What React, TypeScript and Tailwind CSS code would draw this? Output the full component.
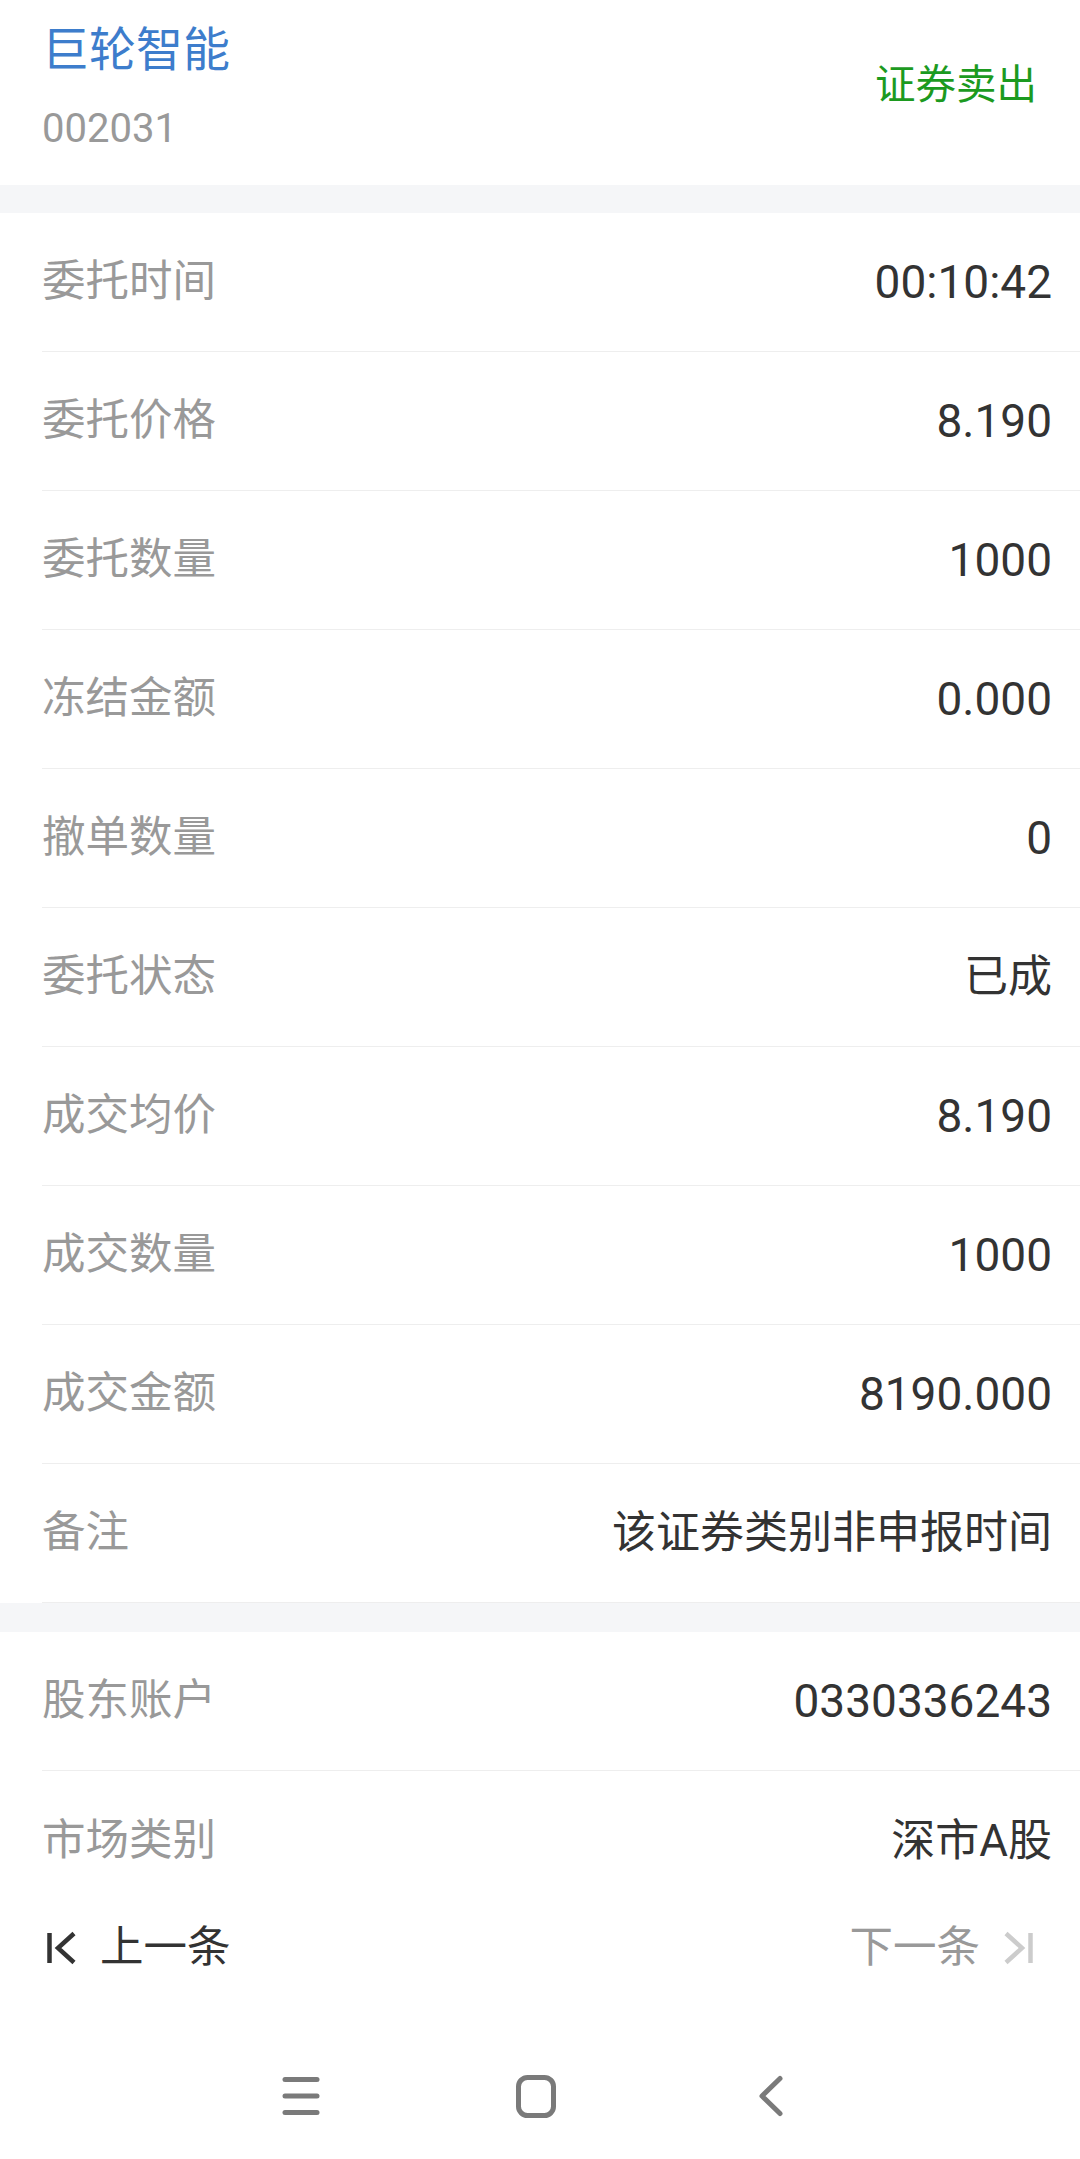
import React from "react";

const rows1: [string, string][] = [
  ["委托时间", "00:10:42"],
  ["委托价格", "8.190"],
  ["委托数量", "1000"],
  ["冻结金额", "0.000"],
  ["撤单数量", "0"],
  ["委托状态", "已成"],
  ["成交均价", "8.190"],
  ["成交数量", "1000"],
  ["成交金额", "8190.000"],
  ["备注", "该证券类别非申报时间"],
];

const rows2: [string, string][] = [
  ["股东账户", "0330336243"],
  ["市场类别", "深市A股"],
];

function Row({ label, value, last }: { label: string; value: string; last?: boolean }) {
  const cjk = /[\u4e00-\u9fff]/.test(value);
  return (
    <div
      className={
        "ml-[42px] pr-[28px] h-[139px] flex items-center justify-between " +
        (last ? "" : "border-b border-[#eeeeee]")
      }
    >
      <span className="text-[43.5px] leading-none text-[#999999]">{label}</span>
      <span className={(cjk ? "text-[44px]" : "text-[46px]") + " leading-none text-[#333333]"}>{value}</span>
    </div>
  );
}

export default function App() {
  return (
    <div className="w-[1080px] h-[2159px] bg-white flex flex-col font-['Roboto','Noto_Sans_CJK_SC',sans-serif] overflow-hidden">
      {/* header */}
      <div className="h-[185px] shrink-0 flex justify-between pl-[42px] pr-[43px]">
        <div className="flex flex-col pt-[22px]">
          <div className="text-[47px] leading-[56px] text-[#3d7dcc]">巨轮智能</div>
          <div className="mt-[28px] text-[40px] leading-[46px] text-[#999999]">002031</div>
        </div>
        <div className="mt-[61px] text-[40.5px] leading-[48px] text-[#1c9a1f]">证券卖出</div>
      </div>
      <div className="h-[28px] shrink-0 bg-[#f5f6f8]" />
      <div className="shrink-0">
        {rows1.map(([l, v]) => (
          <Row key={l} label={l} value={v} />
        ))}
      </div>
      <div className="h-[29px] shrink-0 bg-[#f5f6f8]" />
      <div className="shrink-0">
        {rows2.map(([l, v], i) => (
          <Row key={l} label={l} value={v} last={i === rows2.length - 1} />
        ))}
      </div>
      {/* pagination */}
      <div className="h-[75px] shrink-0 flex items-center justify-between pl-[46px] pr-[46px]">
        <div className="flex items-center gap-[24px]">
          <svg width="30" height="34" viewBox="0 0 30 34" fill="none">
            <line x1="3.5" y1="2" x2="3.5" y2="32" stroke="#333333" strokeWidth="4.5" />
            <polyline points="28,2.5 12,17 28,31.5" stroke="#333333" strokeWidth="4.5" fill="none" />
          </svg>
          <span className="text-[43.5px] leading-none text-[#333333]">上一条</span>
        </div>
        <div className="flex items-center gap-[24px]">
          <span className="text-[43.5px] leading-none text-[#999999]">下一条</span>
          <svg width="30" height="34" viewBox="0 0 30 34" fill="none">
            <polyline points="2,2.5 18,17 2,31.5" stroke="#cccccc" strokeWidth="4.5" fill="none" />
            <line x1="26.5" y1="2" x2="26.5" y2="32" stroke="#cccccc" strokeWidth="4.5" />
          </svg>
        </div>
      </div>
      {/* system nav */}
      <div className="flex-1 flex items-start pt-[90px] pl-[282px]">
        <svg width="38" height="42" viewBox="0 0 38 42" fill="none">
          <line x1="3" y1="4.5" x2="35" y2="4.5" stroke="#7a7a7a" strokeWidth="5" strokeLinecap="round" />
          <line x1="3" y1="21" x2="35" y2="21" stroke="#7a7a7a" strokeWidth="5" strokeLinecap="round" />
          <line x1="3" y1="37.5" x2="35" y2="37.5" stroke="#7a7a7a" strokeWidth="5" strokeLinecap="round" />
        </svg>
        <svg className="ml-[196px]" width="40" height="43" viewBox="0 0 40 43" fill="none">
          <rect x="2.5" y="2.5" width="35" height="38" rx="9" stroke="#7a7a7a" strokeWidth="5" />
        </svg>
        <svg className="ml-[202px]" width="26" height="42" viewBox="0 0 26 42" fill="none">
          <polyline points="22,3.5 4,21 22,38.5" stroke="#7a7a7a" strokeWidth="5" strokeLinecap="round" strokeLinejoin="round" fill="none" />
        </svg>
      </div>
    </div>
  );
}
